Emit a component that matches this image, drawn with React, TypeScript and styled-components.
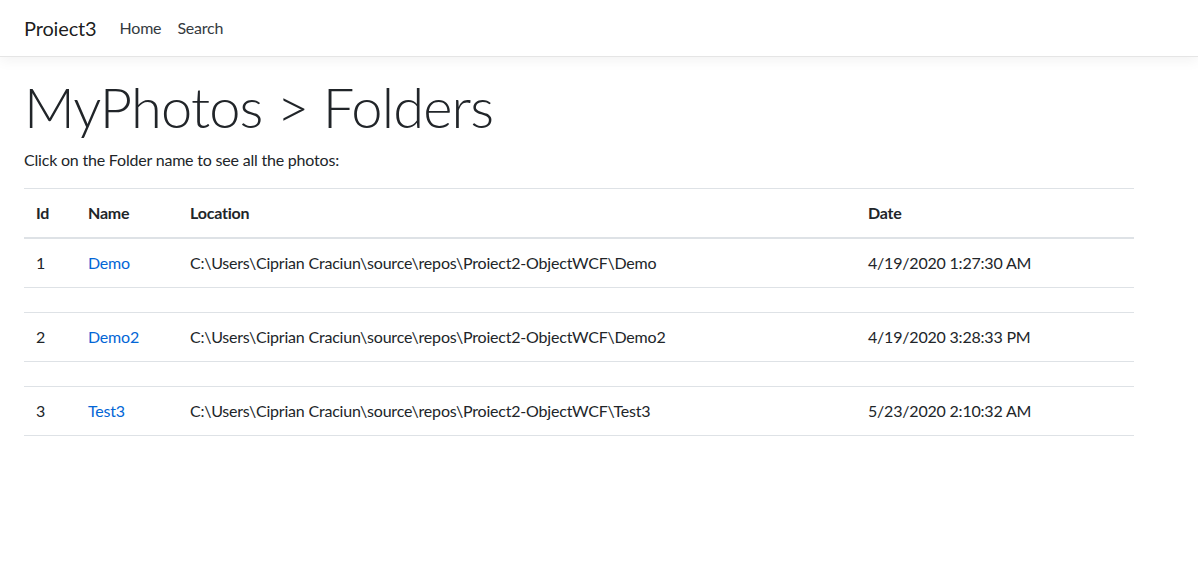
import React from "react";
import styled, { createGlobalStyle } from "styled-components";

const GlobalStyle = createGlobalStyle`
  html, body { margin: 0; padding: 0; background: #fff; }
  body {
    font-family: Lato, "Liberation Sans", sans-serif;
    font-size: 16px;
    line-height: 1.5;
    color: #212529;
    letter-spacing: -0.2px;
  }
`;

const Navbar = styled.header`
  height: 57px;
  box-sizing: border-box;
  display: flex;
  align-items: center;
  padding: 8px 24px;
  background: #fff;
  border-bottom: 1px solid #e5e5e5;
  box-shadow: 0 4px 12px rgba(0, 0, 0, 0.05);
`;

const Brand = styled.a`
  font-size: 20px;
  line-height: 30px;
  color: rgba(0, 0, 0, 0.9);
  text-decoration: none;
  margin-right: 15px;
  letter-spacing: -0.15px;
`;

const NavList = styled.nav`
  display: flex;
`;

const NavLink = styled.a`
  color: #343a40;
  text-decoration: none;
  padding: 8px;
  line-height: 24px;
`;

const Main = styled.main`
  padding: 16px 24px 0;
`;

const Title = styled.h1`
  margin: 0 0 8px;
  font-size: 56px;
  font-weight: 300;
  line-height: 1.2;
  letter-spacing: -0.85px;
`;

const Lead = styled.p`
  margin: 0 0 16px;
`;

const Table = styled.table`
  width: 1110px;
  border-collapse: collapse;
`;

const Th = styled.th<{ w?: number }>`
  text-align: left;
  font-weight: 700;
  padding: 12px;
  vertical-align: bottom;
  border-top: 1px solid #dee2e6;
  border-bottom: 2px solid #dee2e6;
  width: ${(p) => (p.w ? `${p.w}px` : "auto")};
  box-sizing: border-box;
`;

const Td = styled.td`
  padding: 12px;
  vertical-align: top;
  border-top: 1px solid #dee2e6;
  border-bottom: 1px solid #dee2e6;
`;

const FolderLink = styled.a`
  color: #0366d6;
  text-decoration: none;
`;

const rows = [
  { id: 1, name: "Demo", loc: "C:\\Users\\Ciprian Craciun\\source\\repos\\Proiect2-ObjectWCF\\Demo", date: "4/19/2020 1:27:30 AM" },
  { id: 2, name: "Demo2", loc: "C:\\Users\\Ciprian Craciun\\source\\repos\\Proiect2-ObjectWCF\\Demo2", date: "4/19/2020 3:28:33 PM" },
  { id: 3, name: "Test3", loc: "C:\\Users\\Ciprian Craciun\\source\\repos\\Proiect2-ObjectWCF\\Test3", date: "5/23/2020 2:10:32 AM" },
];

export default function App() {
  return (
    <>
      <GlobalStyle />
      <Navbar>
        <Brand href="#">Proiect3</Brand>
        <NavList>
          <NavLink href="#">Home</NavLink>
          <NavLink href="#">Search</NavLink>
        </NavList>
      </Navbar>
      <Main>
        <Title>MyPhotos &gt; Folders</Title>
        <Lead>Click on the Folder name to see all the photos:</Lead>
        <Table>
          <thead>
            <tr>
              <Th w={52}>Id</Th>
              <Th w={102}>Name</Th>
              <Th w={678}>Location</Th>
              <Th>Date</Th>
            </tr>
          </thead>
          <tbody>
            {rows.map((r, i) => (
              <React.Fragment key={r.id}>
                <tr>
                  <Td>{r.id}</Td>
                  <Td>
                    <FolderLink href="#">{r.name}</FolderLink>
                  </Td>
                  <Td>{r.loc}</Td>
                  <Td>{r.date}</Td>
                </tr>
                {i < rows.length - 1 && (
                  <tr>
                    <Td />
                    <Td />
                    <Td />
                    <Td />
                  </tr>
                )}
              </React.Fragment>
            ))}
          </tbody>
        </Table>
      </Main>
    </>
  );
}
